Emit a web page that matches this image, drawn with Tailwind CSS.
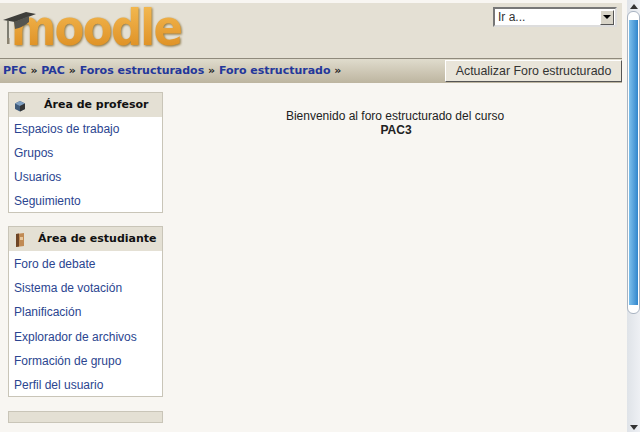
<!DOCTYPE html>
<html lang="es">
<head>
<meta charset="UTF-8">
<title>Moodle</title>
<script src="https://cdn.jsdelivr.net/npm/@tailwindcss/browser@4"></script>
</head>
<body class="w-[640px] h-[432px] overflow-hidden bg-[#f8f6f2] font-['Liberation_Sans',Arial,sans-serif] text-[12px] flex">
  <div class="w-[627px] shrink-0 flex flex-col">
    <!-- cabecera -->
    <header class="mt-[3px] h-[55px] w-[622px] bg-[#e4e0d4] flex justify-between relative">
      <div class="relative pl-[11px] w-[240px]">
        <span class="inline-block origin-left scale-x-[.87] font-['DejaVu_Sans',sans-serif] font-bold text-[50px] leading-[50px] tracking-[-2px] bg-linear-to-b from-[#f4bb52] to-[#dc8c1c] bg-clip-text text-transparent drop-shadow-[1px_1px_1px_#8a7440]">moodle</span>
        <svg class="absolute left-[2px] top-[8px]" width="36" height="34" viewBox="0 0 36 34">
          <path d="M1 9 L24 1 L34 3 L13 11 Z" fill="#3e3e3a"/>
          <path d="M12 11 L27 5 L27 11 C24 14 18 17 13 18 Z" fill="#55554f"/>
          <path d="M6 9 L6 28" stroke="#5c5c52" stroke-width="1.5"/>
          <path d="M5 27 h2.5 v6 h-2.5 Z" fill="#8a8270"/>
        </svg>
      </div>
      <div class="mt-[4px] mr-[5px] w-[124px] h-[20px] border-2 border-t-[#777] border-l-[#777] border-r-[#ddd] border-b-[#ddd] bg-white flex justify-between items-center">
        <span class="pl-[3px] text-[12px] text-[#333]">Ir a...</span>
        <span class="w-[14px] h-[15px] mr-[1px] bg-[#d8d4c8] border border-r-[#555] border-b-[#555] border-t-white border-l-white flex items-center justify-center">
          <span class="w-0 h-0 border-x-[4px] border-x-transparent border-t-[4px] border-t-black"></span>
        </span>
      </div>
    </header>
    <!-- migas -->
    <nav class="h-[25px] w-[622px] bg-linear-to-b from-[#e0dccd] to-[#bdb5a0] border-t border-[#8f8a7c] flex justify-between items-center pl-[3px]">
      <div class="font-['DejaVu_Sans',sans-serif] font-bold text-[11px] tracking-[-0.02px] text-[#222] whitespace-nowrap">
        <a class="text-[#24379a]">PFC</a> » <a class="text-[#24379a]">PAC</a> » <a class="text-[#24379a]">Foros estructurados</a> » <a class="text-[#24379a]">Foro estructurado</a> »
      </div>
      <button class="h-[22px] w-[177px] bg-[#e9e5da] border border-t-white border-l-white border-r-[#555] border-b-[#555] text-[12.4px] text-[#333]">Actualizar Foro estructurado</button>
    </nav>
    <div class="flex pl-[8px] pt-[9px]">
      <!-- columna izquierda -->
      <aside class="w-[155px] shrink-0 flex flex-col gap-[13px]">
        <section class="border border-[#c9c5b8] bg-white">
          <h2 class="h-[24px] pt-[1px] bg-[#e4e0d4] flex items-center whitespace-nowrap font-['DejaVu_Sans',sans-serif] font-bold text-[11px] text-[#111]">
            <svg class="ml-[5px] mr-[18px]" width="12" height="12" viewBox="0 0 12 12"><path d="M6 1 L11 3.5 V9 L6 11.5 L1 9 V3.5 Z" fill="#3f5a78"/><path d="M6 1 L11 3.5 L6 6 L1 3.5 Z" fill="#7f9fc0"/><path d="M6 6 L11 3.5 V9 L6 11.5 Z" fill="#333"/></svg>
            Área de profesor
          </h2>
          <ul class="h-[95px] text-[#2b4590] text-[12px] pl-[5px] leading-[24px]">
            <li>Espacios de trabajo</li>
            <li>Grupos</li>
            <li>Usuarios</li>
            <li class="h-[23px]">Seguimiento</li>
          </ul>
        </section>
        <section class="border border-[#c9c5b8] bg-white">
          <h2 class="h-[24px] pt-[1px] bg-[#e4e0d4] flex items-center whitespace-nowrap font-['DejaVu_Sans',sans-serif] font-bold text-[11px] text-[#111]">
            <svg class="ml-[5px] mr-[12px]" width="12" height="16" viewBox="0 0 12 16"><path d="M2 2 L10 1 V14 L2 15 Z" fill="#c08a54"/><path d="M2 2 L5 1.5 V14.5 L2 15 Z" fill="#6e4526"/><path d="M6 5 h3 v3 h-3 Z" fill="#e8c79c"/></svg>
            Área de estudiante
          </h2>
          <ul class="h-[145px] text-[#2b4590] text-[12px] pl-[5px] pt-[1px] leading-[24.2px]">
            <li>Foro de debate</li>
            <li>Sistema de votación</li>
            <li>Planificación</li>
            <li>Explorador de archivos</li>
            <li>Formación de grupo</li>
            <li class="h-[23px]">Perfil del usuario</li>
          </ul>
        </section>
        <div class="h-[12px] mt-[1px] bg-[#e4e0d4] border border-[#c9c5b8]"></div>
      </aside>
      <!-- contenido -->
      <main class="flex-1 pt-[17px] text-center text-[12px] leading-[14px] text-[#222]">
        <p>Bienvenido al foro estructurado del curso</p>
        <p class="font-bold pl-[2px]">PAC3</p>
      </main>
    </div>
  </div>
  <!-- barra de desplazamiento -->
  <div class="w-[13px] h-full bg-linear-to-r from-[#dfe3e8] to-[#eef0f4] flex flex-col items-center">
    <span class="mt-[4px] w-0 h-0 border-x-[4px] border-x-transparent border-b-[5px] border-b-[#333]"></span>
    <div class="mt-[2px] w-full h-[303px] rounded-[6px] bg-white border border-[#a9b4c2] py-[8px] px-px">
      <div class="h-full bg-linear-to-r from-[#7cc0ec] to-[#2f86cc]"></div>
    </div>
    <span class="mt-auto mb-[2px] w-0 h-0 border-x-[4px] border-x-transparent border-t-[5px] border-t-[#333]"></span>
  </div>
</body>
</html>
